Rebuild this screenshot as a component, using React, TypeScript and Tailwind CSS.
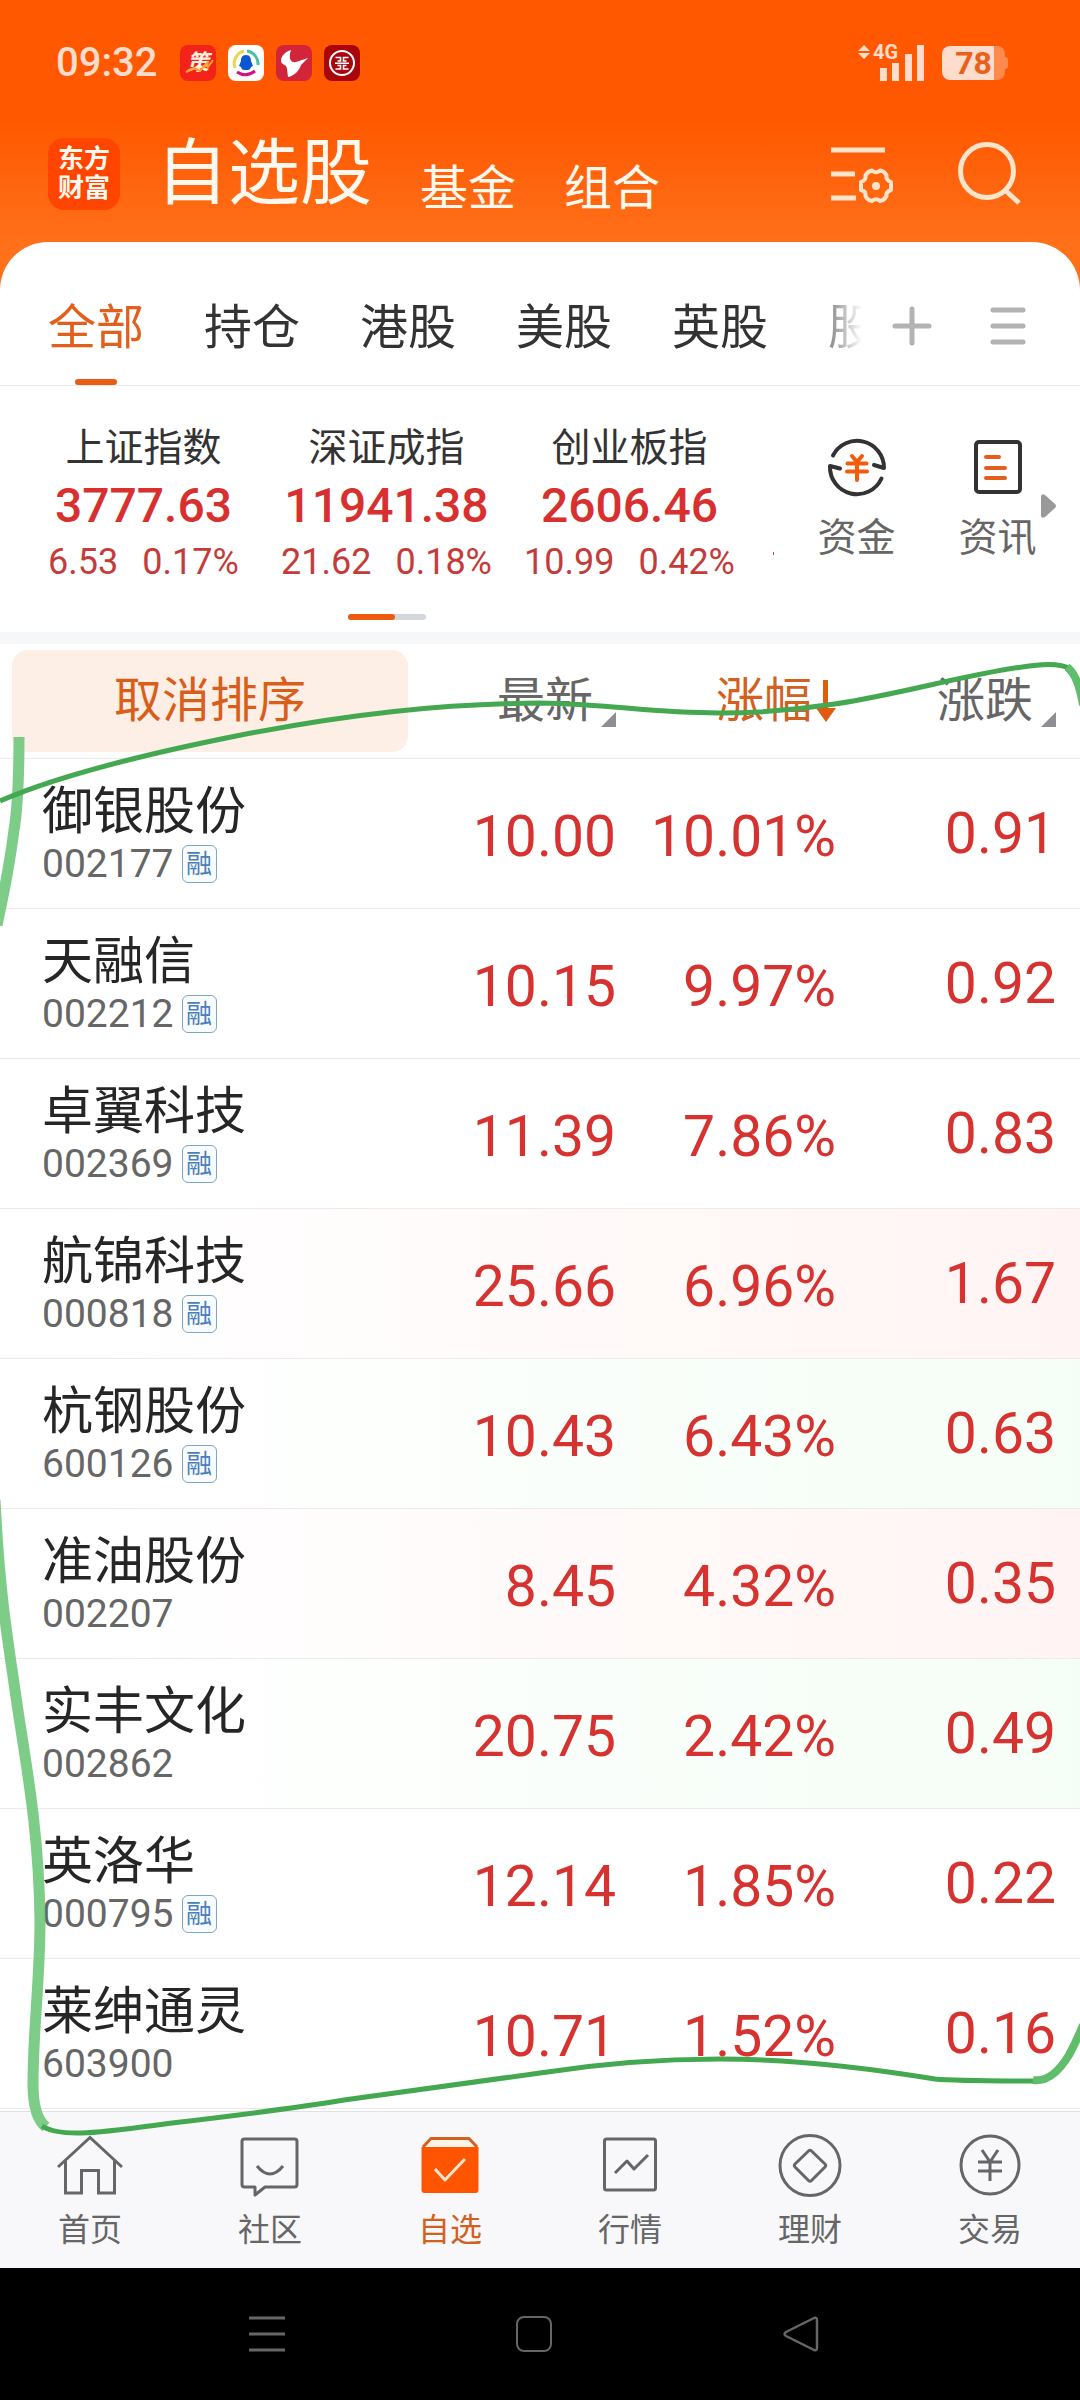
import { clsx } from 'clsx'
import type { ReactNode } from 'react'

type Stock = {
  name: string
  code: string
  margin?: boolean
  price: string
  percent: string
  change: string
  flash?: 'up' | 'down'
}

const stocks: Stock[] = [
  { name: '御银股份', code: '002177', margin: true, price: '10.00', percent: '10.01%', change: '0.91' },
  { name: '天融信', code: '002212', margin: true, price: '10.15', percent: '9.97%', change: '0.92' },
  { name: '卓翼科技', code: '002369', margin: true, price: '11.39', percent: '7.86%', change: '0.83' },
  { name: '航锦科技', code: '000818', margin: true, price: '25.66', percent: '6.96%', change: '1.67', flash: 'up' },
  { name: '杭钢股份', code: '600126', margin: true, price: '10.43', percent: '6.43%', change: '0.63', flash: 'down' },
  { name: '准油股份', code: '002207', price: '8.45', percent: '4.32%', change: '0.35', flash: 'up' },
  { name: '实丰文化', code: '002862', price: '20.75', percent: '2.42%', change: '0.49', flash: 'down' },
  { name: '英洛华', code: '000795', margin: true, price: '12.14', percent: '1.85%', change: '0.22' },
  { name: '莱绅通灵', code: '603900', price: '10.71', percent: '1.52%', change: '0.16' },
]

const indexes = [
  { name: '上证指数', value: '3777.63', change: '6.53', percent: '0.17%' },
  { name: '深证成指', value: '11941.38', change: '21.62', percent: '0.18%' },
  { name: '创业板指', value: '2606.46', change: '10.99', percent: '0.42%' },
]

const groups = ['全部', '持仓', '港股', '美股', '英股', '股']

function StatusBar() {
  return (
    <div className="flex h-[126px] items-center justify-between pl-14 pr-[72px]">
      <div className="flex items-center">
        <span className="w-[124px] text-[40px] font-medium leading-none text-[#ffdccb]">09:32</span>
        <div className="flex gap-3">
          {/* Strategy app */}
          <span className="relative flex size-9 items-center justify-center rounded-lg bg-[#f3231a] text-[22px] font-bold italic leading-none text-[#fff0e0]">
            策
            <svg viewBox="0 0 36 36" className="absolute inset-0 size-9" fill="none">
              <path d="M6 27l8-4 6 3 7-8 1 4 5-7" stroke="#ffa526" strokeWidth="2" />
            </svg>
          </span>
          {/* Securities app with penguin */}
          <svg viewBox="0 0 36 36" className="size-9" fill="none">
            <rect width="36" height="36" rx="8" fill="#fff" />
            <path d="M7 23A13 13 0 0 1 16 6" stroke="#ecd258" strokeWidth="3" />
            <path d="M19 6a13 13 0 0 1 11 14" stroke="#4dc0a4" strokeWidth="3" />
            <path d="M9 27q9 6 18-1" stroke="#d3137c" strokeWidth="3" />
            <path d="M18 10c-4 0-5 3-5 6l-2 5 2 1c1 3 2 3 5 3s4 0 5-3l2-1-2-5c0-3-1-6-5-6z" fill="#0b57cf" />
          </svg>
          {/* Broker app with bull horn */}
          <svg viewBox="0 0 36 36" className="size-9">
            <rect width="36" height="36" rx="8" fill="#d2253a" />
            <path d="M15 5C9 7 5 11 5 16c0 4 6 3 6 8l1 8c6-1 11-6 13-12l7-7-12 4c-5 1-8-3-5-12z" fill="#fff" />
          </svg>
          {/* Bank app */}
          <svg viewBox="0 0 36 36" className="size-9" fill="none" stroke="#fff">
            <rect width="36" height="36" rx="8" fill="#a9060c" stroke="none" />
            <circle cx="18" cy="18" r="12" strokeWidth="2" />
            <path
              d="M11.500 12.500h5v3.500h-3M13.500 20.500h3v3.500h-5M24.500 12.500h-5v3.500h3M22.500 20.500h-3v3.500h5M11 18.250h14"
              strokeWidth="1.600"
            />
          </svg>
        </div>
      </div>

      <div className="flex items-center gap-4">
        <div className="relative h-[38px] w-[68px]">
          <svg viewBox="0 0 68 38" className="h-[38px] w-[68px]" fill="#ffdccb">
            <path d="M6 1l6 6H0zM0 9h12l-6 6z" />
            <path d="M22 24h7v13h-7zM34 19h7v18h-7zM47 10h7v27h-7zM59 1h7v36h-7z" />
          </svg>
          <span className="absolute -top-1 left-[15px] text-[20px] font-bold leading-6 text-[#ffdccb]">4G</span>
        </div>
        <div className="flex items-center">
          <div className="flex h-[34px] w-[63px] items-center justify-center rounded-lg bg-linear-to-r from-[#ffdccb] from-82% to-[#ff8a4d] to-82% text-[32px] font-bold leading-none text-[#e8611c]">
            78
          </div>
          <span className="h-3 w-[3px] rounded-r bg-[#ff8a4d]" />
        </div>
      </div>
    </div>
  )
}

function TopBar() {
  return (
    <div className="flex h-[116px] items-center pb-5 pl-12 pr-[58px] text-[#fff8ee]">
      <div className="flex size-[72px] flex-col items-center justify-center rounded-2xl bg-[#ff4500] text-[26px] font-bold leading-[29px]">
        <span>东方</span>
        <span>财富</span>
      </div>
      <nav className="ml-9 flex flex-1 items-end gap-12 whitespace-nowrap">
        <button className="text-[72px] leading-[84px]">自选股</button>
        <button className="text-[48px] leading-[54px]">基金</button>
        <button className="text-[48px] leading-[54px]">组合</button>
      </nav>
      <div className="flex items-center gap-16">
        <button aria-label="管理自选">
          <svg viewBox="0 0 64 64" className="size-16" fill="none" stroke="#ffe4cc" strokeWidth="5">
            <path d="M1 8h54M1 32h24M1 56h25" />
            <path
              d="M42 28.500q4 3.500 8 0q5 1 6.500 5q-1 4.500 4.500 6.500v8q-5.500 2-4.500 6q-2 4-6.500 5q-4-3.500-8 0q-5-1-6.500-5q1-4.500-4.500-6v-8q5.500-2 4.500-6.500q2-4 6.500-5z"
              strokeWidth="4"
              strokeLinejoin="round"
            />
            <circle cx="46" cy="44" r="4" fill="#ffe4cc" stroke="none" />
          </svg>
        </button>
        <button aria-label="搜索">
          <svg viewBox="0 0 64 64" className="size-16" fill="none" stroke="#ffe4cc" strokeWidth="5">
            <circle cx="29" cy="29" r="26.500" />
            <path d="M47 48l14 13" />
          </svg>
        </button>
      </div>
    </div>
  )
}

function GroupTabs() {
  return (
    <div className="flex h-36 items-stretch border-b border-[#e6e6e6] pr-[54px] pl-12">
      <div className="flex min-w-0 flex-1 gap-[60px] overflow-hidden [mask-image:linear-gradient(to_right,black_93%,transparent)]">
        {groups.map((group, i) => (
          <button
            key={group}
            className={clsx(
              'relative shrink-0 pt-7 text-[48px] leading-[60px]',
              i === 0 ? 'text-[#e2601b]' : 'text-[#333]',
            )}
          >
            {group}
            {i === 0 && <span className="absolute bottom-0 left-1/2 h-1.5 w-[42px] -translate-x-1/2 rounded-full bg-[#e85c14]" />}
          </button>
        ))}
      </div>
      <div className="flex items-center gap-[58px] pt-6 pl-[30px]">
        <button aria-label="添加">
          <svg viewBox="0 0 40 40" className="size-10" stroke="#b3b3b3" strokeWidth="5" strokeLinecap="round">
            <path d="M20 3v34M3 20h34" />
          </svg>
        </button>
        <button aria-label="分组列表">
          <svg viewBox="0 0 36 40" className="h-10 w-9" stroke="#b3b3b3" strokeWidth="5" strokeLinecap="round">
            <path d="M3 4h30M3 20h30M3 36h30" />
          </svg>
        </button>
      </div>
    </div>
  )
}

function Shortcut({ label, children }: { label: string; children: ReactNode }) {
  return (
    <button className="flex w-[141px] flex-col items-center text-[39px] leading-[48px] text-[#666]">
      <svg viewBox="0 0 64 64" className="mb-4 size-16" fill="none" stroke="#333" strokeWidth="4" strokeLinejoin="round" strokeLinecap="round">
        {children}
      </svg>
      {label}
    </button>
  )
}

function IndexPanel() {
  return (
    <section className="flex border-b-12 border-[#f6f7f9]">
      <div className="flex-1 pt-[38px] pb-3">
        <div className="flex items-start">
          <div className="grid flex-1 grid-cols-3 pl-[22px]">
            {indexes.map((item) => (
              <div key={item.name} className="flex flex-col items-center whitespace-nowrap">
                <span className="text-[39px] leading-[48px] text-[#333]">{item.name}</span>
                <span className="text-[48px] font-medium leading-[68px] text-[#d8302f]">{item.value}</span>
                <span className="flex gap-6 text-[36px] leading-[44px] text-[#c43c3a]">
                  <span>{item.change}</span>
                  <span>{item.percent}</span>
                </span>
              </div>
            ))}
          </div>
          {/* next index peeking in */}
          <span className="mt-32 ml-[22px] h-[3px] w-px bg-[#c43c3a]" />
        </div>
        <div className="mx-auto mt-[30px] h-1.5 w-[78px] rounded-full bg-[#d3d6da]">
          <div className="h-full w-[47px] rounded-full bg-[#ee5a10]" />
        </div>
      </div>

      <div className="relative flex w-[306px] pt-12 pl-3">
        <Shortcut label="资金">
          <path d="M8 21.500A27 27 0 0 1 59 34L49 31M56.500 44.500A27 27 0 0 1 5 32L15 34.500" />
          <path d="M27 22l5 6 5-6M22.500 29.500h19M22 37.500h20M32 28v18" stroke="#f25c0c" />
        </Shortcut>
        <Shortcut label="资讯">
          <rect x="10" y="8" width="44" height="50" rx="3" />
          <path d="M20 23h13M20 34h19M20 44h19" stroke="#e2601b" />
        </Shortcut>
        <svg viewBox="0 0 15 24" className="absolute top-[108px] right-6 h-6 w-[15px]" fill="#999">
          <path d="M0 2q1-3 4-1l10 9q2 2 0 4l-10 9q-3 2-4-1z" />
        </svg>
      </div>
    </section>
  )
}

function Corner() {
  return (
    <svg viewBox="0 0 15 15" className="mb-1 size-[15px]" fill="#8e8e93">
      <path d="M15 0v15H0z" />
    </svg>
  )
}

function StockTable() {
  const th = 'border-b border-[#ebebeb] p-0 font-normal'
  const td = 'h-[150px] border-b border-[#ebebeb] p-0 text-right text-[57px] leading-[60px] text-[#d63230]'

  return (
    <table className="mb-0.5 w-full table-fixed border-separate border-spacing-0">
      <thead>
        <tr className="h-[115px] text-[48px] leading-[60px] text-[#666]">
          <th className={clsx(th, 'pl-3')}>
            <button className="h-[102px] w-full rounded-2xl bg-[#fdeee6] text-[#d85e1a]">取消排序</button>
          </th>
          <th className={clsx(th, 'w-[208px]')}>
            <button className="flex w-full items-end justify-end gap-2">最新<Corner /></button>
          </th>
          <th className={clsx(th, 'w-[220px]')}>
            <button className="flex w-full items-center justify-end gap-1 text-[#d2601f]">
              涨幅
              <svg viewBox="0 0 20 42" className="h-[42px] w-5" fill="#e25a10">
                <path d="M7 0h5v28h8L10 42 0 28h7z" />
              </svg>
            </button>
          </th>
          <th className={clsx(th, 'w-[244px] pr-6')}>
            <button className="flex w-full items-end justify-end gap-2">涨跌<Corner /></button>
          </th>
        </tr>
      </thead>
      <tbody>
        {stocks.map((stock) => (
          <tr
            key={stock.code}
            className={clsx(
              stock.flash === 'up' && 'bg-linear-to-r from-white from-10% to-[#fff4f3]',
              stock.flash === 'down' && 'bg-linear-to-r from-white from-10% to-[#f5fef6]',
            )}
          >
            <td className="h-[150px] border-b border-[#ebebeb] p-0 pl-[42px]">
              <div className="text-[51px] leading-[60px] text-[#262626]">{stock.name}</div>
              <div className="flex items-center gap-2 text-[39px] leading-[44px] text-[#666]">
                {stock.code}
                {stock.margin && (
                  <span className="flex h-[38px] w-[35px] items-center justify-center rounded-md border border-[#7fa6c4] bg-[#f8fcff] text-[26px] leading-none text-[#4a80b8]">
                    融
                  </span>
                )}
              </div>
            </td>
            <td className={clsx(td, 'pt-1.5')}>{stock.price}</td>
            <td className={clsx(td, 'pt-1.5')}>{stock.percent}</td>
            <td className={clsx(td, 'pr-6')}>{stock.change}</td>
          </tr>
        ))}
      </tbody>
    </table>
  )
}

function NavItem({ label, active, children }: { label: string; active?: boolean; children: ReactNode }) {
  return (
    <a href="#" className={clsx('flex flex-1 flex-col items-center pt-5', active ? 'text-[#d2601f]' : 'text-[#666]')}>
      <svg viewBox="0 0 66 66" className="size-[66px]" fill="none" stroke="currentColor" strokeWidth="3" strokeLinejoin="round">
        {children}
      </svg>
      <span className="mt-2.5 text-[32px] leading-[44px]">{label}</span>
    </a>
  )
}

function BottomNav() {
  return (
    <nav className="flex h-[157px] border-t border-[#e0e0e2] bg-[#f8f8fa]">
      <NavItem label="首页">
        <path d="M1 35L33 5.500 65 35M8.500 29v32h16V38.500h17V61h16V29" strokeLinejoin="miter" />
      </NavItem>
      <NavItem label="社区">
        <path d="M7.500 7h50q2.500 0 2.500 2.500v43q0 2.500-2.500 2.500H28l-10 8v-8H7.500Q5 55 5 52.500v-43Q5 7 7.500 7z" />
        <path d="M20 34q13 16 26 0" />
      </NavItem>
      <NavItem label="自选" active>
        <path d="M6 15L14 6.500h38L60 15" fill="#fff3ea" />
        <path d="M4.500 15h57v43q0 3-3 3h-51q-3 0-3-3z" fill="#ff5500" stroke="none" />
        <path d="M18 37l10 11 20-21" stroke="#ffe6cf" />
      </NavItem>
      <NavItem label="行情">
        <rect x="7.500" y="7" width="51" height="51" rx="2" />
        <path d="M18 41l12-12 7 8 14-14" />
      </NavItem>
      <NavItem label="理财">
        <circle cx="33" cy="33.500" r="30" />
        <path d="M31.500 19q1.500-1.500 3 0L48 32q1.500 1.500 0 3L34.500 48.500q-1.500 1.500-3 0L18 35q-1.500-1.500 0-3z" />
      </NavItem>
      <NavItem label="交易">
        <circle cx="33" cy="33" r="29" />
        <path d="M25 18l8 12 8-12M21 30h24M21 39h24M33 30v19" />
      </NavItem>
    </nav>
  )
}

function SystemNav() {
  return (
    <div className="grid h-[132px] grid-cols-3 place-items-center bg-black pr-[146px] pl-[133px]">
      <button aria-label="最近任务">
        <svg viewBox="0 0 36 36" className="size-9" stroke="#666" strokeWidth="3">
          <path d="M0 2h36M0 18h36M0 34h36" />
        </svg>
      </button>
      <button aria-label="主屏幕" className="size-9 rounded-lg border-2 border-[#666]" />
      <button aria-label="返回">
        <svg viewBox="0 0 36 36" className="size-9" fill="none" stroke="#666" strokeWidth="2.500" strokeLinejoin="round">
          <path d="M31 2q3-1 3 2v28q0 3-3 2L3 20q-3-2 0-4z" />
        </svg>
      </button>
    </div>
  )
}

// Hand-drawn marker loop over the list
function MarkerLoop() {
  return (
    <svg viewBox="0 0 1080 2400" preserveAspectRatio="none" className="pointer-events-none absolute inset-0 size-full" fill="none">
      <g stroke="#6bc678" strokeOpacity="0.88" strokeWidth="11">
        <path d="M19 737Q19 800 14 830Q9 870-3 925" />
        <path d="M-5 1500C0 1600 8 1640 17 1704C26 1765 39 1830 40 1921C40 1980 33 2030 33 2084Q33 2117 46 2127" />
      </g>
      <g stroke="#43a850" strokeWidth="5">
        <path d="M0 801C60 775 150 753 241 735C350 714 440 704 540 703C610 704 650 713 719 713C850 713 930 680 1022 667Q1058 661 1070 669" />
        <path d="M42 2126C60 2138 100 2133 172 2123C240 2115 290 2109 344 2100L540 2073C610 2062 670 2059 720 2059C800 2059 880 2070 935 2079Q955 2081 1036 2081" />
      </g>
      <g stroke="#5fbd6c" strokeWidth="8">
        <path d="M1067 667Q1078 675 1083 705" />
        <path d="M1033 2080Q1052 2083 1069 2055Q1077 2040 1083 2025" />
      </g>
    </svg>
  )
}

export default function App() {
  return (
    <div className="relative overflow-hidden bg-white font-['Roboto','Noto_Sans_CJK_SC',sans-serif]">
      <header className="-mb-12 bg-linear-to-b from-[#ff5800] from-42% to-[#ff7018] to-84% pb-12">
        <StatusBar />
        <TopBar />
      </header>
      <main className="relative rounded-t-[48px] bg-white">
        <GroupTabs />
        <IndexPanel />
        <StockTable />
      </main>
      <BottomNav />
      <SystemNav />
      <MarkerLoop />
    </div>
  )
}
